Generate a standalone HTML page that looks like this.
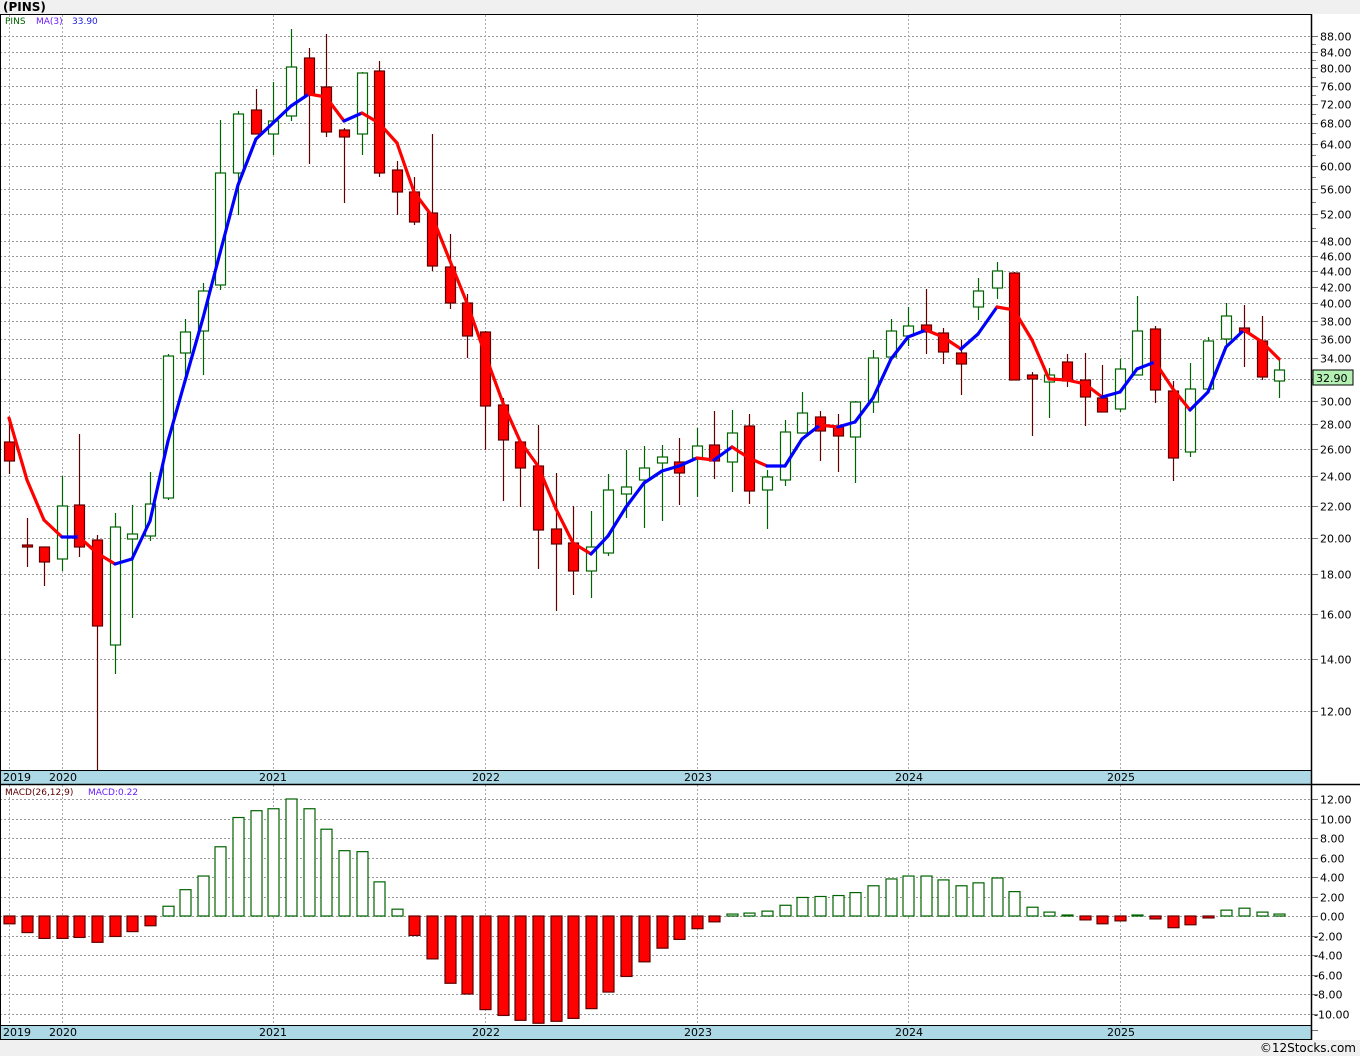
<!DOCTYPE html>
<html><head><meta charset="utf-8">
<style>
html,body{margin:0;padding:0;background:#f0f0f0;}
svg{display:block;}
text{font-family:"DejaVu Sans","Liberation Sans",sans-serif;}
</style></head>
<body>
<svg id="s" width="1360" height="1056" xmlns="http://www.w3.org/2000/svg">
<rect x="0" y="14" width="1360" height="1026" fill="#fff"/>
<text x="3" y="11" font-size="12" font-weight="bold" fill="#000">(PINS)</text>
<g id="grid"></g>
<g id="candles"></g>
<g id="ma"></g>
<g id="macd"></g>
<!-- date bars -->
<rect x="0" y="770" width="1311" height="14" fill="#add8e6"/>
<line x1="0" y1="770.5" x2="1311" y2="770.5" stroke="#000"/>
<line x1="0" y1="784.5" x2="1360" y2="784.5" stroke="#000" stroke-width="1.5"/>
<rect x="0" y="1025" width="1311" height="14" fill="#add8e6"/>
<line x1="0" y1="1025.5" x2="1311" y2="1025.5" stroke="#000"/>
<line x1="0" y1="1039.5" x2="1311" y2="1039.5" stroke="#000"/>
<line x1="0" y1="14.5" x2="1311" y2="14.5" stroke="#000"/>
<line x1="0.5" y1="14" x2="0.5" y2="1040" stroke="#000"/>
<line x1="1311.5" y1="14" x2="1311.5" y2="1040" stroke="#000" stroke-width="1.5"/>
<g font-size="11" fill="#000">
<text x="3" y="781">2019</text><text x="49" y="781">2020</text><text x="259" y="781">2021</text><text x="472" y="781">2022</text><text x="684" y="781">2023</text><text x="895" y="781">2024</text><text x="1107" y="781">2025</text>
<text x="3" y="1036">2019</text><text x="49" y="1036">2020</text><text x="259" y="1036">2021</text><text x="472" y="1036">2022</text><text x="684" y="1036">2023</text><text x="895" y="1036">2024</text><text x="1107" y="1036">2025</text>
</g>
<g font-size="9">
<text x="5" y="24" fill="#006400">PINS</text><text x="36" y="24" fill="#6a1bff">MA(3)</text><text x="72" y="24" fill="#2020e0">33.90</text>
<text x="5" y="795" fill="#600000">MACD(26,12,9)</text><text x="88" y="795" fill="#6a1bff">MACD:0.22</text>
</g>
<rect x="1313" y="370" width="40" height="15" fill="#b4f0b4" stroke="#000"/>
<text x="1316" y="382" font-size="11" fill="#000">32.90</text>
<text x="1356" y="1052" font-size="12" fill="#000" text-anchor="end">©12Stocks.com</text>
</svg>
<script>
var NS="http://www.w3.org/2000/svg",S=document.getElementById('s');
function el(p,t,a){var e=document.createElementNS(NS,t);for(var k in a)e.setAttribute(k,a[k]);p.appendChild(e);return e;}
function Y(p){return 36+(Math.log(88)-Math.log(p))*338.9;}
var G=document.getElementById('grid');
var prices=[88,84,80,76,72,68,64,60,56,52,48,46,44,42,40,38,36,34,32,30,28,26,24,22,20,18,16,14,12];
prices.forEach(function(p){var y=Math.round(Y(p))+0.5;
el(G,'line',{x1:0,x2:1311,y1:y,y2:y,stroke:'#999','stroke-dasharray':'2,2'});
el(G,'line',{x1:1311,x2:1318,y1:y,y2:y,stroke:'#777'});
if(p!=32){var t=el(G,'text',{x:1320,y:y+4,'font-size':11,fill:'#000'});t.textContent=p.toFixed(2);}});
[86,82,78,74,70,66,62,58,54,50].forEach(function(p){var y=Math.round(Y(p))+0.5;el(G,'line',{x1:1311,x2:1316,y1:y,y2:y,stroke:'#777'});});
[9,62,273,485,697,908,1120].forEach(function(x){el(G,'line',{x1:x+.5,x2:x+.5,y1:15,y2:770,stroke:'#aaa','stroke-dasharray':'2,2'});el(G,'line',{x1:x+.5,x2:x+.5,y1:785,y2:1025,stroke:'#aaa','stroke-dasharray':'2,2'});});
for(var v=12;v>=-10;v-=2){var y=Math.round(916-v*9.75)+0.5;
el(G,'line',{x1:0,x2:1311,y1:y,y2:y,stroke:'#999','stroke-dasharray':'2,2'});
el(G,'line',{x1:1311,x2:1318,y1:y,y2:y,stroke:'#777'});
var t=el(G,'text',{x:v<0?1314:1320,y:y+4,'font-size':11,fill:'#000'});t.textContent=(v<0?'-':'')+Math.abs(v).toFixed(2);}
el(G,'line',{x1:1311,x2:1318,y1:1030.5,y2:1030.5,stroke:'#777'});
// candles: x,high,top,bot,low,color
var C=[[9,423,442,461,474,'r'],[27,518,545,547,567,'r'],[44,547,547,562,586,'r'],[62,476,506,559,571,'g'],[79,434,505,547,557,'r'],[97,535,540,626,770,'r'],[115,513,527,645,674,'g'],[132,505,534,539,618,'g'],[150,472,504,536,541,'g'],[168,354,356,498,500,'g'],[185,319,332,353,375,'g'],[203,283,291,331,375,'g'],[220,120,173,285,290,'g'],[238,111,114,173,215,'g'],[256,89,110,134,134,'r'],[273,82,121,134,155,'g'],[291,29,67,116,121,'g'],[309,48,58,95,164,'r'],[326,34,87,132,137,'r'],
[344,128,130,137,203,'r'],[362,72,73,134,155,'g'],[379,61,71,173,177,'r'],[397,161,170,192,215,'r'],[414,177,192,222,225,'r'],[432,134,213,266,271,'r'],[450,234,267,303,309,'r'],[467,294,303,336,358,'r'],[485,331,332,406,450,'r'],[503,398,405,440,501,'r'],[520,442,442,468,507,'r'],[538,425,466,530,569,'r'],[556,473,529,544,611,'r'],[573,506,543,571,595,'r'],[591,511,547,571,598,'g'],[608,474,490,553,556,'g'],[626,450,487,494,518,'g'],[644,446,468,480,528,'g'],
[662,445,457,463,521,'g'],[679,438,462,473,505,'r'],[697,428,446,458,497,'g'],[714,411,445,461,479,'r'],[732,410,433,462,492,'g'],[749,414,426,491,504,'r'],[767,470,477,490,529,'g'],[785,420,432,480,486,'g'],[802,392,413,433,433,'g'],[820,411,417,431,461,'r'],[838,414,426,436,472,'r'],[855,401,402,437,483,'g'],[873,350,358,402,413,'g'],[891,319,331,357,357,'g'],[908,307,326,336,346,'g'],[926,289,325,332,354,'r'],[943,328,333,352,364,'r'],[961,340,353,364,395,'r'],[978,278,291,307,320,'g'],
[997,262,271,288,299,'g'],[1014,272,273,380,380,'r'],[1032,372,375,379,436,'r'],[1049,368,375,382,418,'g'],[1067,354,362,381,387,'r'],[1085,353,380,397,426,'r'],[1102,365,398,412,412,'r'],[1120,359,369,409,412,'g'],[1137,296,331,375,375,'g'],[1155,326,329,390,403,'r'],[1173,381,391,458,481,'r'],[1190,363,389,452,457,'g'],[1208,337,341,389,389,'g'],[1226,303,316,339,346,'g'],[1244,305,328,332,367,'r'],[1262,316,341,377,380,'r'],[1279,358,370,381,398,'g']];
var CG=document.getElementById('candles');
C.forEach(function(c){var x=c[0]+.5,r=c[5]=='r',wc=r?'#600000':'#006400';
el(CG,'line',{x1:x,x2:x,y1:c[1],y2:c[4],stroke:wc,'stroke-width':1.2});
el(CG,'rect',{x:x-5,y:c[2],width:10,height:Math.max(1,c[3]-c[2]),fill:r?'#ff0000':'#fff',stroke:r?'#600000':'#006400','stroke-width':1.2});});
var M=[[9,418],[27,480],[44,520],[62,537],[79,537],[97,553],[115,564],[132,559],[150,521],[168,441],[185,381],[203,318],[220,253],[238,185],[256,139],[273,123],[291,106],[309,94],[326,97],[344,121],[362,113],[379,123],[397,143],[414,192],[432,216],[450,261],[467,303],[485,354],[503,403],[520,441],[538,466],[556,509],[573,543],[591,554],[608,536],[626,507],[644,483],[662,471],[679,466],[697,458],[714,460],[732,447],[749,458],[767,466],[785,466],[802,439],[820,425],[838,427],[855,422],[873,398],[891,359],[908,337],[926,330],[943,337],[961,349],[978,334],[997,307],[1014,310],[1032,340],[1049,379],[1067,380],[1085,384],[1102,397],[1120,392],[1137,369],[1155,362],[1173,389],[1190,410],[1208,392],[1226,347],[1244,330],[1262,342],[1279,359]];
var MG=document.getElementById('ma');
for(var i=1;i<M.length;i++){el(MG,'line',{x1:M[i-1][0],y1:M[i-1][1],x2:M[i][0],y2:M[i][1],stroke:M[i][1]>M[i-1][1]?'#ff0000':'#0000ff','stroke-width':3.2,'stroke-linecap':'round'});}
var V=[-0.8,-1.7,-2.3,-2.3,-2.2,-2.7,-2.1,-1.6,-1.0,1.0,2.7,4.1,7.1,10.1,10.8,11.0,12.0,11.0,8.9,6.7,6.6,3.5,0.7,-2.0,-4.4,-6.9,-8.0,-9.6,-10.2,-10.7,-11.0,-10.8,-10.5,-9.5,-7.8,-6.2,-4.7,-3.3,-2.4,-1.3,-0.6,0.2,0.3,0.5,1.1,1.9,2.0,2.1,2.4,3.1,3.8,4.1,4.1,3.7,3.1,3.4,3.9,2.5,0.9,0.4,0.1,-0.4,-0.8,-0.5,0.05,-0.3,-1.2,-0.9,-0.2,0.6,0.8,0.4,0.2];
var HG=document.getElementById('macd');
V.forEach(function(v,i){var x=C[i][0]+.5,h=Math.max(1,Math.abs(v)*9.75),y=v>=0?916-h:916;
el(HG,'rect',{x:x-5.5,y:y,width:11,height:h,fill:v<0?'#ff0000':'#fff',stroke:v<0?'#600000':'#006400','stroke-width':1.2});});
</script>
</body></html>
